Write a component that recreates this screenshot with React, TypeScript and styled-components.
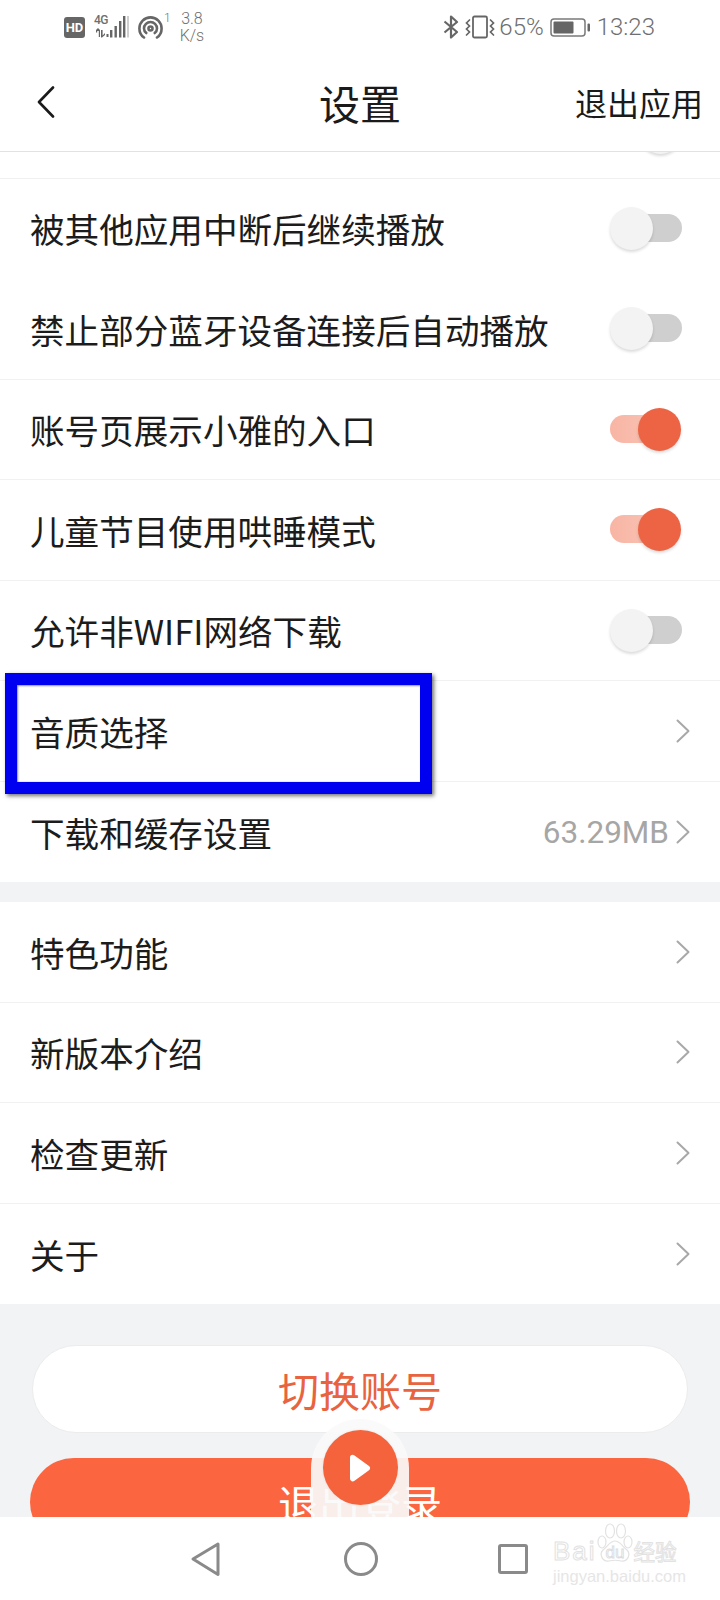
import styled, { createGlobalStyle } from 'styled-components';

const GlobalStyle = createGlobalStyle`
  html, body {
    margin: 0;
    padding: 0;
    background: #fff;
  }
  body {
    font-family: "Noto Sans CJK SC", "Liberation Sans", sans-serif;
  }
`;

const Page = styled.div`
  position: relative;
  display: flex;
  flex-direction: column;
  width: 720px;
  height: 1600px;
  overflow: hidden;
  background: #fff;
`;

const StatusBar = styled.div`
  display: flex;
  justify-content: space-between;
  align-items: center;
  height: 54px;
  padding: 0 65px 0 64px;
  font-family: Roboto, "Liberation Sans", sans-serif;
  font-weight: 300;
  color: #6f6f6f;
`;

const StatusGroup = styled.div<{ $gap: number }>`
  display: flex;
  align-items: center;
  gap: ${({ $gap }) => $gap}px;
`;

const HdBadge = styled.span`
  display: flex;
  align-items: center;
  justify-content: center;
  width: 21px;
  height: 21px;
  border-radius: 3px;
  background: #666;
  color: #fff;
  font-size: 13px;
  font-weight: 700;
`;

const SignalBox = styled.div`
  position: relative;
  width: 35px;
  height: 24px;
`;

const FourG = styled.span`
  position: absolute;
  top: -1px;
  left: 0;
  font-size: 12px;
  font-weight: 500;
  letter-spacing: -0.5px;
  line-height: 12px;
`;

const SpeedText = styled.div`
  display: flex;
  flex-direction: column;
  gap: 1px;
  font-size: 16px;
  line-height: 16px;
  text-align: center;
`;

const SmallOne = styled.span`
  align-self: flex-start;
  margin: 0 0 0 -8px;
  font-size: 12px;
  line-height: 14px;
`;

const StatusText = styled.span`
  font-size: 24px;
  line-height: 28px;
`;

const VibrateIcon = styled.svg`
  margin-right: -2px;
`;

const Header = styled.header`
  display: grid;
  grid-template-columns: 1fr auto 1fr;
  align-items: center;
  height: 98px;
  padding-bottom: 2px;
  border-bottom: 1px solid #e2e2e2;
  box-sizing: border-box;
`;

const BackButton = styled.div`
  display: flex;
  padding-left: 36px;
`;

const Title = styled.h1`
  margin: 0;
  font-size: 41px;
  font-weight: 400;
  color: #1a1a1a;
  line-height: 50px;
`;

const HeaderAction = styled.div`
  justify-self: end;
  padding-right: 17px;
  font-size: 32px;
  color: #1a1a1a;
  line-height: 44px;
`;

const Content = styled.main`
  flex: 1;
  min-height: 0;
  overflow: hidden;
  background: #f2f3f5;
`;

const ScrolledStub = styled.div`
  display: flex;
  justify-content: flex-end;
  height: 26.5px;
  padding-right: 38px;
  overflow: hidden;
  box-sizing: border-box;
  background: #fff;
  border-bottom: 1px solid #f0f0f0;
`;

const StubKnob = styled.div`
  width: 43px;
  height: 43px;
  margin: -41px 0 0 0;
  border-radius: 50%;
  background: #f3f3f3;
  box-shadow: 0 2px 3px rgba(0, 0, 0, 0.15);
`;

const Section = styled.section`
  background: #fff;

  & + & {
    margin-top: 20px;
  }
`;

const Row = styled.div<{ $noLine?: boolean }>`
  position: relative;
  display: flex;
  align-items: center;
  justify-content: space-between;
  box-sizing: border-box;
  height: 100.5px;
  padding: 0 30px;
  border-bottom: 1px solid ${({ $noLine }) => ($noLine ? 'transparent' : '#f1f1f1')};

  &:last-child {
    border-bottom: none;
  }
`;

const Label = styled.span`
  font-size: 34.6px;
  line-height: 48px;
  color: #1c1c1c;
`;

const RowEnd = styled.div`
  display: flex;
  align-items: center;
  gap: 7px;
`;

const Value = styled.span`
  position: relative;
  top: 1px;
  font-family: Roboto, "Liberation Sans", sans-serif;
  font-size: 31.5px;
  color: #a6a6a6;
`;

const Toggle = styled.div`
  position: relative;
  width: 72px;
  height: 43px;
  margin-right: 8px;
`;

const Track = styled.div<{ $on: boolean }>`
  position: absolute;
  top: 7px;
  height: 28px;
  border-radius: 14px;
  ${({ $on }) =>
    $on
      ? 'left: 0; width: 62px; background: linear-gradient(90deg, #f8b5a4, #f9c7ba);'
      : 'right: 0; width: 55px; background: #cfcfcf;'}
`;

const Knob = styled.div<{ $on: boolean }>`
  position: absolute;
  top: 0;
  width: 43px;
  height: 43px;
  border-radius: 50%;
  box-shadow: 0 2px 3px rgba(0, 0, 0, 0.14);
  ${({ $on }) => ($on ? 'right: 1px; background: #ec6444;' : 'left: 0; background: #f3f3f3;')}
`;

const HighlightBox = styled.div`
  position: absolute;
  top: -8px;
  left: 5px;
  width: 427px;
  height: 121px;
  box-sizing: border-box;
  border: 12px solid #0000f0;
  box-shadow: 2px 2px 4px rgba(0, 0, 0, 0.55), inset 1px 1px 2px rgba(0, 0, 0, 0.45);
  pointer-events: none;
`;

const ButtonArea = styled.div`
  display: flex;
  flex-direction: column;
  gap: 25px;
  padding: 41px 30px 0;
`;

const OutlineButton = styled.div`
  display: flex;
  align-items: center;
  justify-content: center;
  height: 88px;
  margin: 0 2px;
  box-sizing: border-box;
  border: 1px solid #ececec;
  border-radius: 44px;
  background: #fff;
  color: #e8633f;
  font-size: 41px;
`;

const FilledButton = styled.div`
  display: flex;
  align-items: center;
  justify-content: center;
  flex-shrink: 0;
  height: 88px;
  border-radius: 44px;
  background: #fb6641;
  color: #fff;
  font-size: 41px;
`;

const PlayerHalo = styled.div`
  position: absolute;
  left: 311px;
  top: 1419px;
  display: flex;
  justify-content: center;
  width: 98px;
  height: 98px;
  padding-top: 11px;
  box-sizing: border-box;
  border-radius: 49px 49px 0 0;
  background: rgba(250, 250, 250, 0.92);
`;

const PlayerDisc = styled.div`
  display: flex;
  align-items: center;
  justify-content: center;
  width: 75px;
  height: 75px;
  border-radius: 50%;
  background: #f4633c;
  box-shadow: 0 0 3px rgba(0, 0, 0, 0.08);
`;

const NavBar = styled.nav`
  position: relative;
  display: flex;
  align-items: center;
  gap: 122px;
  height: 83px;
  padding-left: 190px;
  background: #fff;
  box-sizing: border-box;
`;

const SquareIcon = styled.svg`
  margin-left: -4px;
`;

const Watermark = styled.div`
  position: absolute;
  top: 6px;
  left: 553px;
  width: 128px;
  color: #e6e6e6;
  font-family: "Liberation Sans", sans-serif;
`;

const WatermarkTop = styled.div`
  display: flex;
  align-items: flex-end;
  height: 40px;
`;

const WatermarkWord = styled.span`
  font-size: 26px;
  line-height: 24px;
  letter-spacing: 2px;
  color: #fff;
  -webkit-text-stroke: 1px #e2e2e2;
`;

const WatermarkCjk = styled.span`
  margin-left: 1px;
  font-family: "Noto Sans CJK SC", sans-serif;
  font-size: 21.5px;
  line-height: 24px;
  color: #fff;
  -webkit-text-stroke: 1px #e2e2e2;
`;

const Paw = styled.svg`
  flex-shrink: 0;
`;

const WatermarkUrl = styled.div`
  margin-top: 5px;
  font-size: 16.5px;
  line-height: 16px;
  white-space: nowrap;
`;

const topRows = [
  { label: '被其他应用中断后继续播放', on: false, noLine: true },
  { label: '禁止部分蓝牙设备连接后自动播放', on: false },
  { label: '账号页展示小雅的入口', on: true },
  { label: '儿童节目使用哄睡模式', on: true },
  { label: '允许非WIFI网络下载', on: false },
];

const linkRows = ['特色功能', '新版本介绍', '检查更新', '关于'];

function Chevron() {
  return (
    <svg width="14" height="24" viewBox="0 0 14 24" fill="none">
      <path d="M1.5 1.5 12.5 12 1.5 22.5" stroke="#a8a8a8" strokeWidth="2" strokeLinecap="round" strokeLinejoin="round" />
    </svg>
  );
}

function SettingToggle({ on }: { on: boolean }) {
  return (
    <Toggle>
      <Track $on={on} />
      <Knob $on={on} />
    </Toggle>
  );
}

export default function App() {
  return (
    <Page>
      <GlobalStyle />
      <StatusBar>
        <StatusGroup $gap={9}>
          <HdBadge>HD</HdBadge>
          <SignalBox>
            <FourG>4G</FourG>
            <svg width="35" height="24" viewBox="0 0 35 24" fill="#666">
              <path d="M2 15l2-2 2 2v7H4.800v-6H3.200v1.500H2zM7 15h1.600v5.500L11 18v2l-3 2.500H7zM12.500 19h2v3h-2z" />
              <rect x="16" y="15" width="2.400" height="7.500" />
              <rect x="20.500" y="11" width="2.400" height="11.500" />
              <rect x="25" y="6" width="2.400" height="16.500" />
              <rect x="29" y="1" width="2.400" height="21.500" />
              <rect x="33" y="1" width="2" height="21.500" fill="#cfcfcf" />
            </svg>
          </SignalBox>
          <svg width="25" height="23" viewBox="0 0 25 23" fill="none" stroke="#666" strokeWidth="2.600" strokeLinecap="round">
            <path d="M6 21.500C3 19.500 1.400 16 1.400 12.500 1.400 6.300 6.400 1.400 12.500 1.400S23.600 6.300 23.600 12.500C23.600 16 22 19.500 19 21.500" />
            <path d="M8.300 17C6.800 15.800 6 14.200 6 12.500 6 9 9 6 12.500 6S19 9 19 12.500C19 14.200 18.200 15.800 16.700 17" />
            <circle cx="12.500" cy="12.500" r="2" />
          </svg>
          <SmallOne>1</SmallOne>
          <SpeedText>
            <span>3.8</span>
            <span>K/s</span>
          </SpeedText>
        </StatusGroup>
        <StatusGroup $gap={6}>
          <svg width="16" height="24" viewBox="0 0 16 24" fill="none" stroke="#666" strokeWidth="2.200" strokeLinejoin="round">
            <path d="M1.500 6.500 14 17 8 22.500V1.500L14 7 1.500 17.500" />
          </svg>
          <VibrateIcon width="30" height="24" viewBox="0 0 30 24" fill="none" stroke="#666" strokeWidth="1.800" strokeLinecap="round">
            <rect x="8" y="1.500" width="14" height="21" rx="1.500" />
            <path d="M4.500 5 1.500 8l3 3-3 3 3 3-3 3" strokeWidth="1.700" />
            <path d="M25.500 5 28.500 8l-3 3 3 3-3 3 3 3" strokeWidth="1.700" />
          </VibrateIcon>
          <StatusText>65%</StatusText>
          <svg width="41" height="19" viewBox="0 0 41 19" fill="none">
            <rect x="1" y="1" width="34" height="17" rx="3" stroke="#7a7a7a" strokeWidth="1.500" />
            <rect x="3.500" y="3.500" width="20" height="12" rx="1" fill="#666" />
            <rect x="37.500" y="5.500" width="2.500" height="8" rx="1" fill="#666" />
          </svg>
          <StatusText>13:23</StatusText>
        </StatusGroup>
      </StatusBar>

      <Header>
        <BackButton>
          <svg width="20" height="32" viewBox="0 0 20 32" fill="none">
            <path d="M17 1.500 3 16l14 14.500" stroke="#1a1a1a" strokeWidth="2.600" strokeLinecap="round" strokeLinejoin="round" />
          </svg>
        </BackButton>
        <Title>设置</Title>
        <HeaderAction>退出应用</HeaderAction>
      </Header>

      <Content>
        <ScrolledStub>
          <StubKnob />
        </ScrolledStub>
        <Section>
          {topRows.map((row) => (
            <Row key={row.label} $noLine={row.noLine}>
              <Label>{row.label}</Label>
              <SettingToggle on={row.on} />
            </Row>
          ))}
          <Row>
            <Label>音质选择</Label>
            <Chevron />
            <HighlightBox />
          </Row>
          <Row>
            <Label>下载和缓存设置</Label>
            <RowEnd>
              <Value>63.29MB</Value>
              <Chevron />
            </RowEnd>
          </Row>
        </Section>
        <Section>
          {linkRows.map((label) => (
            <Row key={label}>
              <Label>{label}</Label>
              <Chevron />
            </Row>
          ))}
        </Section>
        <ButtonArea>
          <OutlineButton>切换账号</OutlineButton>
          <FilledButton>退出登录</FilledButton>
        </ButtonArea>
      </Content>

      <PlayerHalo>
        <PlayerDisc>
          <svg width="24" height="30" viewBox="0 0 24 30" fill="#fff">
            <path d="M2 4.500C2 2 4.500 1 6.500 2.500L21 13c1.500 1.200 1.500 3 0 4.200L6.500 27.800C4.500 29.200 2 28 2 25.500Z" />
          </svg>
        </PlayerDisc>
      </PlayerHalo>

      <NavBar>
        <svg width="31" height="36" viewBox="0 0 31 36" fill="none" stroke="#8a8a8a" strokeWidth="3" strokeLinejoin="round">
          <path d="M28 3 3 18l25 15.500Z" />
        </svg>
        <svg width="36" height="36" viewBox="0 0 36 36" fill="none" stroke="#8a8a8a" strokeWidth="3">
          <circle cx="18" cy="18" r="15.500" />
        </svg>
        <SquareIcon width="32" height="32" viewBox="0 0 32 32" fill="none" stroke="#8a8a8a" strokeWidth="3" strokeLinejoin="round">
          <rect x="2.500" y="2.500" width="27" height="27" rx="1.500" />
        </SquareIcon>
        <Watermark>
          <WatermarkTop>
            <WatermarkWord>Bai</WatermarkWord>
            <Paw width="36" height="40" viewBox="0 0 36 40" fill="#fff" stroke="#e2e2e2" strokeWidth="1.200">
              <ellipse cx="5" cy="19" rx="4" ry="6" />
              <ellipse cx="13" cy="8" rx="4.500" ry="7" />
              <ellipse cx="24" cy="8" rx="4.500" ry="7" />
              <ellipse cx="31" cy="19" rx="4" ry="6" />
              <path d="M18 18c5 0 7 5 12 9 4 4 1 12-6 11-4-1-8-1-12 0-7 1-10-7-6-11 5-4 7-9 12-9Z" />
              <text x="18" y="35" textAnchor="middle" fontSize="17" fontFamily="Liberation Sans, sans-serif" fill="#fff" stroke="#dcdcdc" strokeWidth="0.900">
                du
              </text>
            </Paw>
            <WatermarkCjk>经验</WatermarkCjk>
          </WatermarkTop>
          <WatermarkUrl>jingyan.baidu.com</WatermarkUrl>
        </Watermark>
      </NavBar>
    </Page>
  );
}
